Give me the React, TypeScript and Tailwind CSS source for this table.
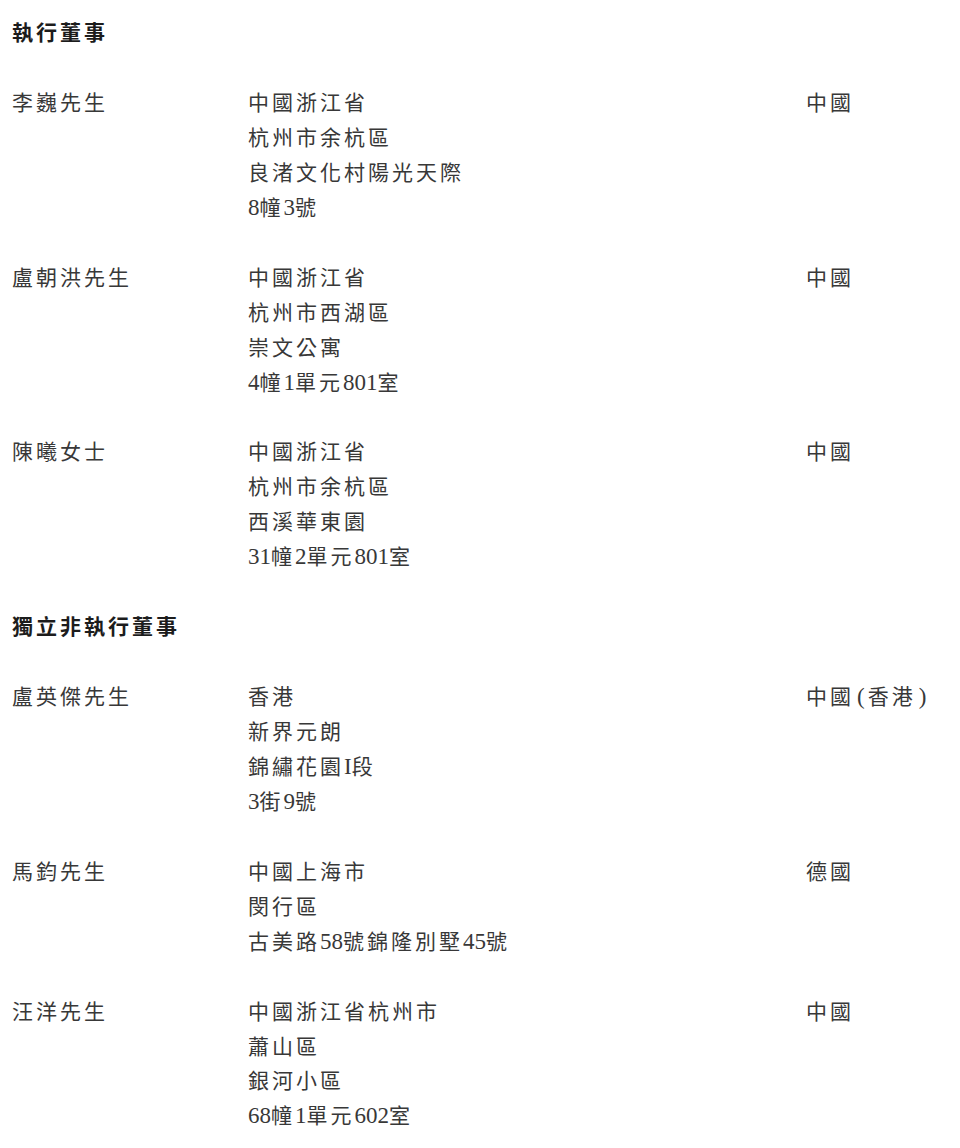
import React from "react";

type Row = { name: string; addr: string[]; nat: string };

const exec: Row[] = [
  { name: "李巍先生", addr: ["中國浙江省", "杭州市余杭區", "良渚文化村陽光天際", "8幢3號"], nat: "中國" },
  { name: "盧朝洪先生", addr: ["中國浙江省", "杭州市西湖區", "崇文公寓", "4幢1單元801室"], nat: "中國" },
  { name: "陳曦女士", addr: ["中國浙江省", "杭州市余杭區", "西溪華東園", "31幢2單元801室"], nat: "中國" },
];

const indep: Row[] = [
  { name: "盧英傑先生", addr: ["香港", "新界元朗", "錦繡花園I段", "3街9號"], nat: "中國(香港)" },
  { name: "馬鈞先生", addr: ["中國上海市", "閔行區", "古美路58號錦隆別墅45號"], nat: "德國" },
  { name: "汪洋先生", addr: ["中國浙江省杭州市", "蕭山區", "銀河小區", "68幢1單元602室"], nat: "中國" },
];

function T({ text }: { text: string }) {
  const parts = text.split(/([0-9A-Za-z]+|[()])/).filter((p) => p.length > 0);
  return (
    <>
      {parts.map((p, i) => {
        if (p === "(" || p === ")") {
          return (
            <span key={i} className="px-[3px] text-[23px] tracking-normal">
              {p}
            </span>
          );
        }
        if (/^[0-9A-Za-z]+$/.test(p)) {
          return (
            <span key={i} className="text-[23px] tracking-normal">
              {p}
            </span>
          );
        }
        return (
          <span key={i} className="tracking-[3px]">
            {p}
          </span>
        );
      })}
    </>
  );
}

function Section({ title, rows }: { title: string; rows: Row[] }) {
  return (
    <div className="flex flex-col">
      <div className="mb-[34.95px] font-bold text-[#1c1c1c] tracking-[3px]">{title}</div>
      {rows.map((r) => (
        <div key={r.name} className="mb-[34.95px] grid grid-cols-[236px_558px_1fr]">
          <div>
            <T text={r.name} />
          </div>
          <div className="flex flex-col">
            {r.addr.map((a) => (
              <div key={a}>
                <T text={a} />
              </div>
            ))}
          </div>
          <div>
            <T text={r.nat} />
          </div>
        </div>
      ))}
    </div>
  );
}

export default function App() {
  return (
    <div
      className="min-h-[1148px] w-[960px] bg-white pl-[12px] pt-[16px] text-[21px] leading-[34.95px] text-[#383838]"
      style={{ fontFamily: '"Liberation Serif", "Noto Sans CJK TC", serif' }}
    >
      <Section title="執行董事" rows={exec} />
      <Section title="獨立非執行董事" rows={indep} />
    </div>
  );
}
